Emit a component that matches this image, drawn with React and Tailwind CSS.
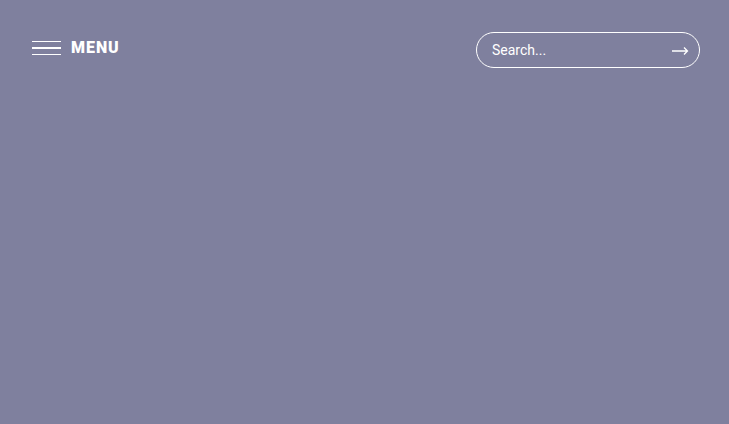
import React from 'react';

export default function App() {
  return (
    <div className="w-full min-h-screen bg-[#7f809e] text-white" style={{ fontFamily: 'Roboto, "Liberation Sans", sans-serif' }}>
      <header className="flex items-start justify-between pl-8 pr-[29px] pt-8">
        <button className="flex items-center gap-[10px] mt-[8px]">
          <span className="flex flex-col gap-[5px] w-[29px]">
            <span className="block h-[1.5px] bg-white"></span>
            <span className="block h-[1.5px] bg-white"></span>
            <span className="block h-[1.5px] bg-white"></span>
          </span>
          <span className="text-[16px] font-black tracking-[0.06em] leading-none">MENU</span>
        </button>
        <div className="flex items-center w-[224px] h-[36px] border border-white rounded-full pl-[15px] pr-[10px]">
          <span className="flex-1 text-[14px] font-normal text-white">Search...</span>
          <svg width="17" height="10" viewBox="0 0 17 10" fill="none" stroke="white" strokeWidth="1.3" className="mt-[2px]">
            <path d="M0 5h15.5M12 1.5l3.5 3.5-3.5 3.5" />
          </svg>
        </div>
      </header>
    </div>
  );
}
